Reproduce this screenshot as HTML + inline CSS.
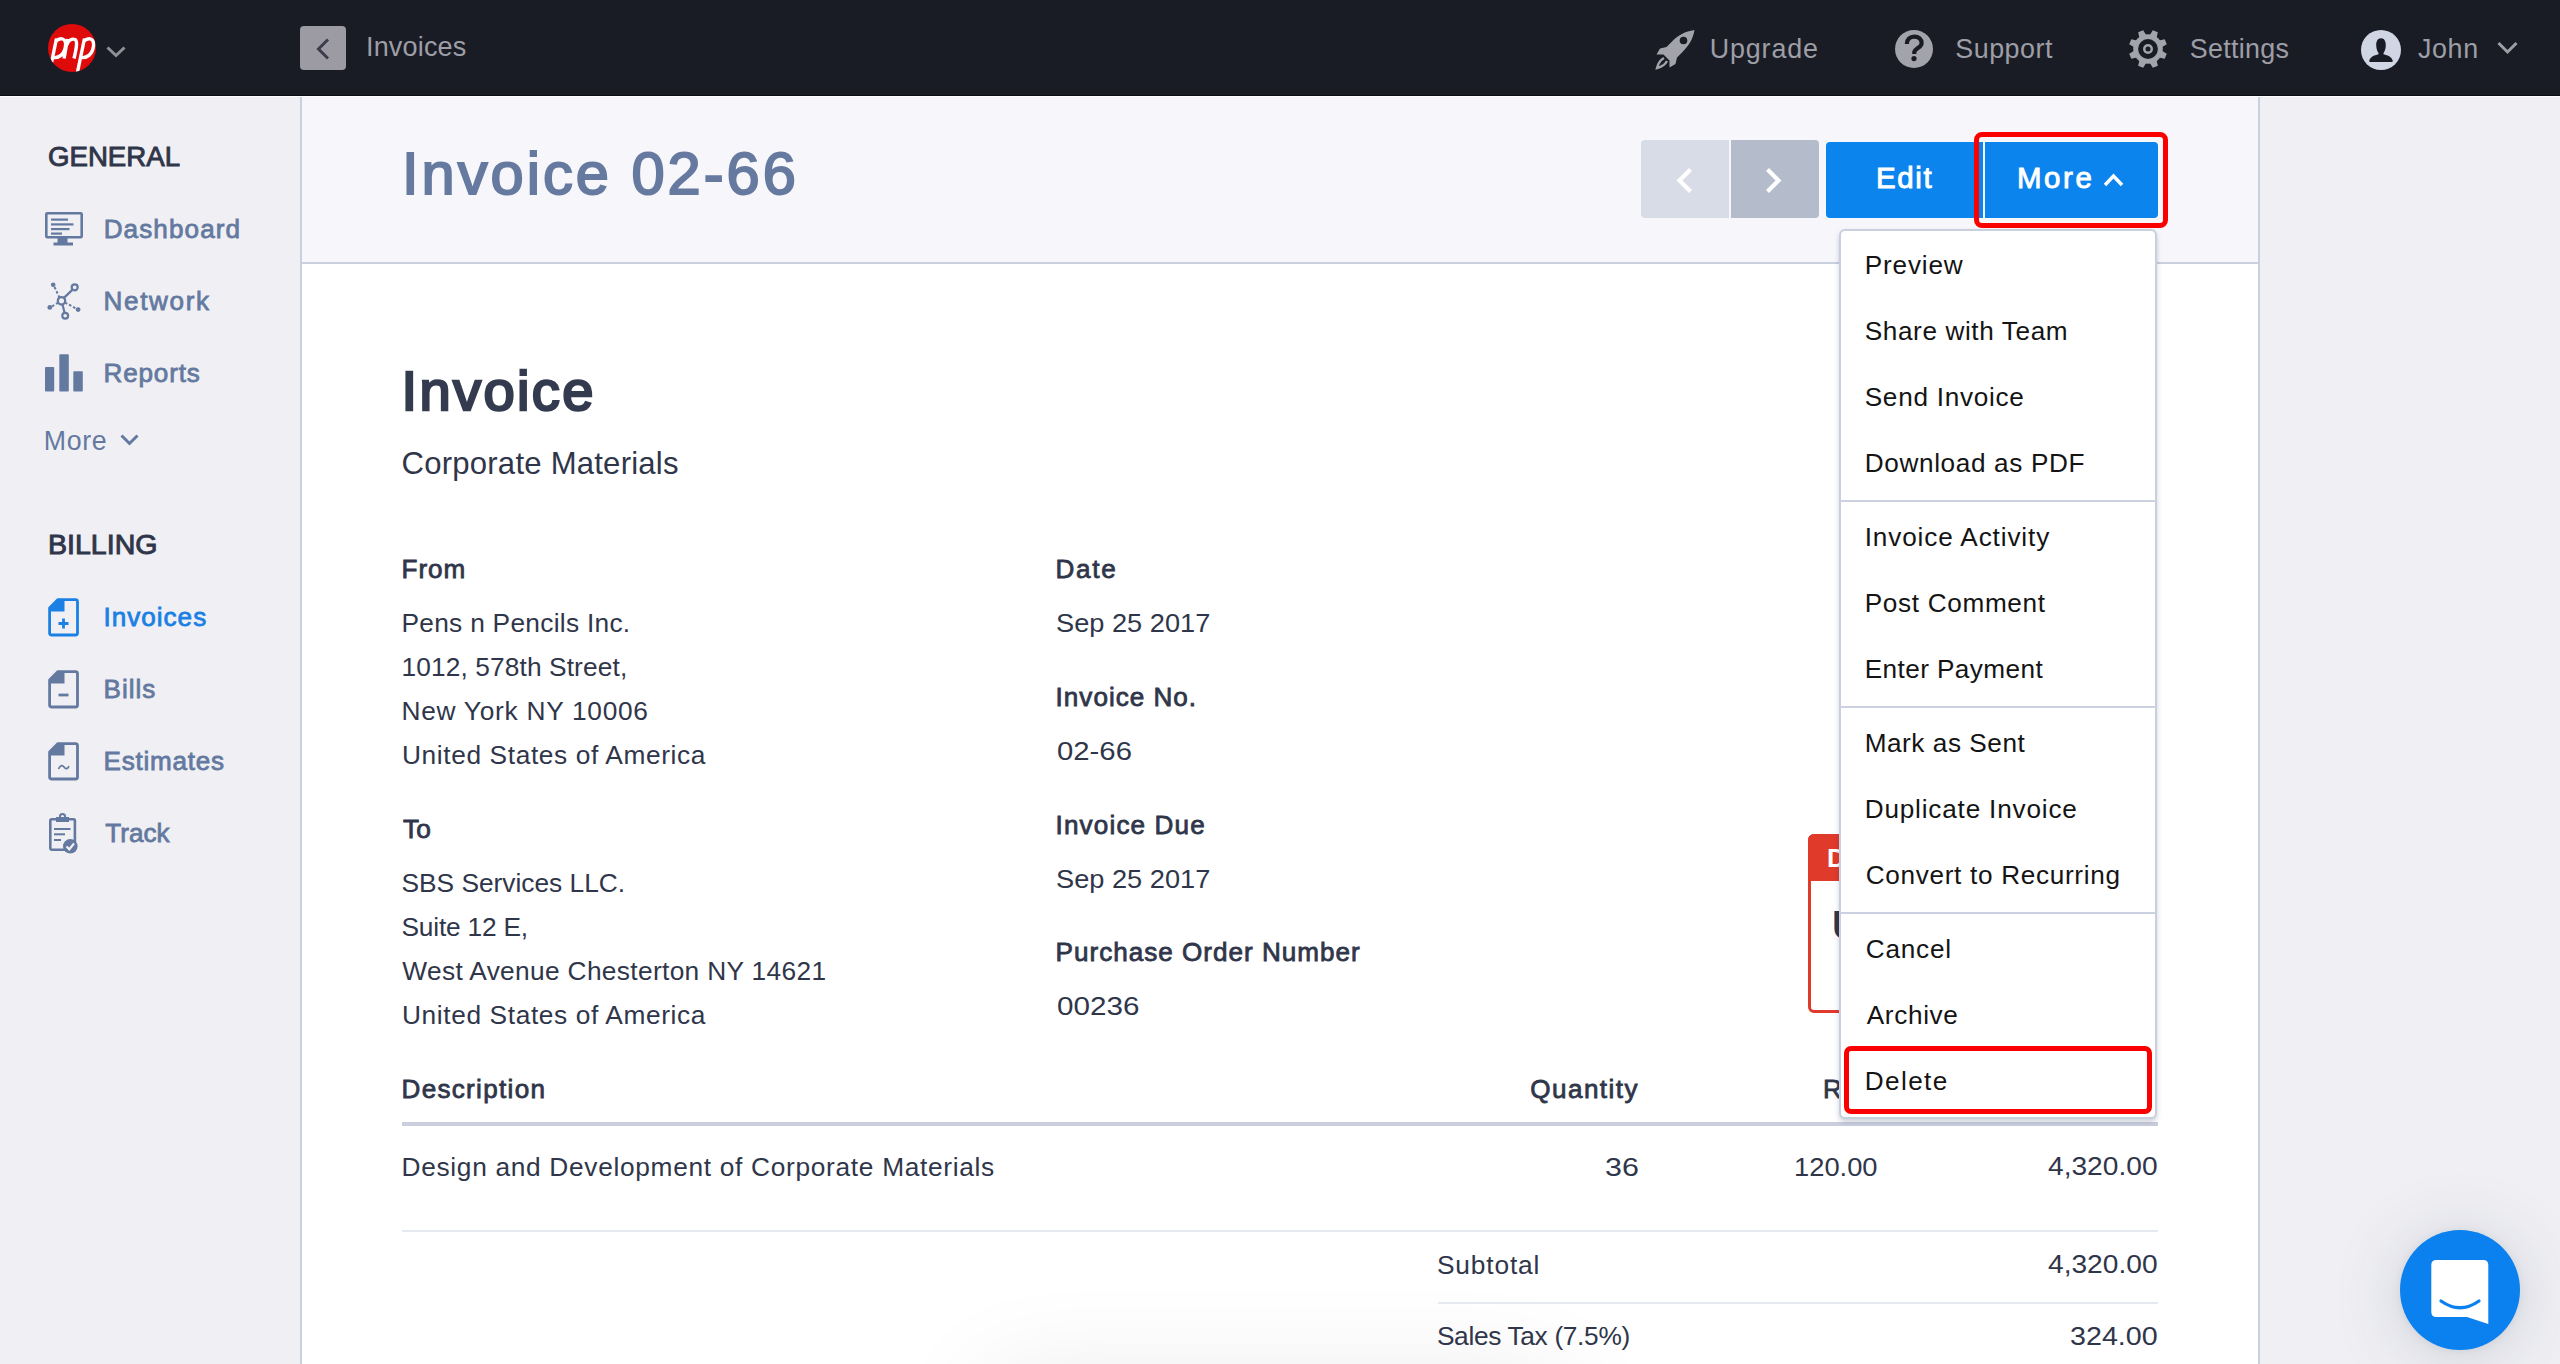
<!DOCTYPE html><html><head><meta charset="utf-8"><style>
*{box-sizing:border-box}
html,body{margin:0;padding:0}
body{width:2560px;height:1364px;overflow:hidden;position:relative;background:#f0f0f4;font-family:"Liberation Sans",sans-serif}
.a{position:absolute}
.t{position:absolute;white-space:nowrap;line-height:1}
svg{position:absolute;overflow:visible}
</style></head><body><div class="a" style="left:0;top:0;width:2560px;height:96px;background:#1a1c25"></div>
<div class="a" style="left:0;top:95px;width:2560px;height:1px;background:#0a0c12"></div>
<div class="a" style="left:0;top:96px;width:2560px;height:1px;background:#ffffff"></div>
<div class="a" style="left:302px;top:97px;width:1956px;height:1267px;background:#ffffff"></div>
<div class="a" style="left:302px;top:97px;width:1956px;height:165px;background:#f7f7fb"></div>
<div class="a" style="left:302px;top:262px;width:1956px;height:2px;background:#cbd0e0"></div>
<div class="a" style="left:300px;top:97px;width:2px;height:1267px;background:#cbd0e0"></div>
<div class="a" style="left:2258px;top:97px;width:2px;height:1267px;background:#cbd0e0"></div>
<div class="a" style="left:990px;top:1385px;width:570px;height:80px;border-radius:8px;background:#fff;box-shadow:0 0 110px rgba(20,30,60,0.105)"></div>
<svg style="left:0;top:0" width="200" height="96" viewBox="0 0 200 96">
<defs><clipPath id="lc"><circle cx="72" cy="48" r="24"/></clipPath></defs>
<circle cx="72" cy="48" r="24" fill="#df0a0a"/>
<g clip-path="url(#lc)" fill="none" stroke="#fff" stroke-width="3.4" stroke-linecap="butt">
<path d="M56.5,38.5 L50,70"/><path d="M56,41 C60,37.5 66.5,37.5 65.5,46 C64.5,54 59.5,58.5 52.5,57.5"/>
<path d="M64,58.5 L67.6,39"/><path d="M66.8,45 C68.5,40 72,38.3 75,39.5 C77.8,41 76.5,48 74,58.5"/>
<path d="M84.5,38.5 L77.5,72"/><path d="M84,41 C88,37.5 94.5,37.5 93.5,46 C92.5,54 87.5,58.5 80.5,57.5"/>
</g>
<polyline points="107.5,47.5 116,55.5 124.5,47.5" fill="none" stroke="#8f9098" stroke-width="3"/>
</svg>
<div class="a" style="left:300px;top:26px;width:46px;height:44px;border-radius:4px;background:#9c9ba3"></div>
<svg style="left:0;top:0" width="400" height="96"><polyline points="328,39.5 318.5,49 328,58.5" fill="none" stroke="#3b3d4c" stroke-width="3"/></svg>
<div class="t" style="left:366.00px;top:34.10px;font-size:27.03px;font-weight:400;letter-spacing:0.171px;color:#9d9ea6;">Invoices</div>
<div class="t" style="left:1709.80px;top:35.80px;font-size:26.89px;font-weight:400;letter-spacing:0.833px;color:#9d9ea6;">Upgrade</div>
<div class="t" style="left:1955.30px;top:35.80px;font-size:26.89px;font-weight:400;letter-spacing:0.500px;color:#9d9ea6;">Support</div>
<div class="t" style="left:2189.80px;top:35.80px;font-size:26.89px;font-weight:400;letter-spacing:0.286px;color:#9d9ea6;">Settings</div>
<div class="t" style="left:2417.90px;top:35.80px;font-size:26.89px;font-weight:400;letter-spacing:0.667px;color:#9d9ea6;">John</div>
<svg style="left:1655px;top:29px" width="42" height="40" viewBox="0 0 42 40">
<path d="M39.5,1 C30,2.5 23,6 17,12.5 L11.5,18 L5,19.5 L1.5,25.5 L8.5,25.5 L14.5,31.5 L14.5,38.5 L20.5,35 L22,28.5 L27.5,23 C34,16.5 38,10 39.5,1 Z" fill="#a2a3ab"/>
<circle cx="28.5" cy="11.5" r="3.8" fill="#1a1c25"/>
<path d="M9,29 C5,31 3,35 2,39 C6,38 10,36 12,32" fill="none" stroke="#a2a3ab" stroke-width="2.4"/>
</svg>
<svg style="left:1894px;top:29px" width="40" height="40" viewBox="0 0 40 40">
<circle cx="20" cy="20" r="19" fill="#a2a3ab"/>
<path d="M12.8,15 C12.8,10.5 16,7.6 20.2,7.6 C24.6,7.6 27.6,10.3 27.6,14.2 C27.6,18.5 21.2,19.2 20.3,23 L20.3,25" fill="none" stroke="#1a1c25" stroke-width="4.2"/>
<circle cx="20" cy="29.6" r="2.6" fill="#1a1c25"/>
</svg>
<svg style="left:2128px;top:29px" width="40" height="40" viewBox="0 0 40 40">
<polygon points="32.94,21.20 38.78,24.85 36.71,29.85 30.00,28.30 28.30,30.00 29.85,36.71 24.85,38.78 21.20,32.94 18.80,32.94 15.15,38.78 10.15,36.71 11.70,30.00 10.00,28.30 3.29,29.85 1.22,24.85 7.06,21.20 7.06,18.80 1.22,15.15 3.29,10.15 10.00,11.70 11.70,10.00 10.15,3.29 15.15,1.22 18.80,7.06 21.20,7.06 24.85,1.22 29.85,3.29 28.30,10.00 30.00,11.70 36.71,10.15 38.78,15.15 32.94,18.80" fill="#a2a3ab"/>
<circle cx="20" cy="20" r="14.8" fill="#a2a3ab"/><circle cx="20" cy="20" r="9.9" fill="#1a1c25"/>
<circle cx="20" cy="20" r="5" fill="#a2a3ab"/><circle cx="20" cy="20" r="2.5" fill="#1a1c25"/>
</svg>
<svg style="left:2361px;top:30px" width="40" height="40" viewBox="0 0 40 40">
<circle cx="20" cy="20" r="20" fill="#d0d6e4"/>
<path d="M20,8.2 C23.3,8.2 24.8,11 24.8,15 C24.8,19 23.5,21.8 22.5,23 L22.5,24.3 C27,25.3 31.2,27.3 31.8,31 Q31.8,32 30.8,32 L9.2,32 Q8.2,32 8.2,31 C8.8,27.3 13,25.3 17.5,24.3 L17.5,23 C16.5,21.8 15.2,19 15.2,15 C15.2,11 16.7,8.2 20,8.2 Z" fill="#1a1c25"/>
</svg>
<svg style="left:0;top:0" width="2560" height="96"><polyline points="2498.5,43 2507.5,52 2516.5,43" fill="none" stroke="#9d9ea6" stroke-width="3"/></svg>
<div class="t" style="left:47.80px;top:143.00px;font-size:28.05px;font-weight:400;-webkit-text-stroke:0.95px #30364a;letter-spacing:0.000px;color:#30364a;transform:scaleX(0.9850);transform-origin:0 0;">GENERAL</div>
<div class="t" style="left:103.70px;top:216.20px;font-size:26.09px;font-weight:400;-webkit-text-stroke:0.81px #6479a0;letter-spacing:1.100px;color:#6479a0;">Dashboard</div>
<div class="t" style="left:103.50px;top:287.90px;font-size:26.09px;font-weight:400;-webkit-text-stroke:0.81px #6479a0;letter-spacing:1.667px;color:#6479a0;">Network</div>
<div class="t" style="left:103.50px;top:360.20px;font-size:26.09px;font-weight:400;-webkit-text-stroke:0.81px #6479a0;letter-spacing:0.833px;color:#6479a0;">Reports</div>
<div class="t" style="left:43.80px;top:427.70px;font-size:26.74px;font-weight:400;letter-spacing:0.667px;color:#6479a0;">More</div>
<div class="t" style="left:47.50px;top:531.00px;font-size:27.49px;font-weight:400;-webkit-text-stroke:0.95px #30364a;letter-spacing:0.000px;color:#30364a;transform:scaleX(1.0392);transform-origin:0 0;">BILLING</div>
<div class="t" style="left:103.50px;top:603.60px;font-size:26.09px;font-weight:400;-webkit-text-stroke:0.81px #1b80e4;letter-spacing:1.000px;color:#1b80e4;">Invoices</div>
<div class="t" style="left:103.50px;top:675.80px;font-size:26.09px;font-weight:400;-webkit-text-stroke:0.81px #6479a0;letter-spacing:1.000px;color:#6479a0;">Bills</div>
<div class="t" style="left:103.60px;top:748.00px;font-size:26.09px;font-weight:400;-webkit-text-stroke:0.81px #6479a0;letter-spacing:0.750px;color:#6479a0;">Estimates</div>
<div class="t" style="left:105.30px;top:820.00px;font-size:26.09px;font-weight:400;-webkit-text-stroke:0.81px #6479a0;letter-spacing:0.000px;color:#6479a0;">Track</div>
<svg style="left:44px;top:211px" width="40" height="36" viewBox="0 0 40 36">
<rect x="2.3" y="2.3" width="35.4" height="24" rx="1" fill="none" stroke="#6479a0" stroke-width="2.6"/>
<rect x="7" y="7.5" width="17" height="2.2" fill="#6479a0"/><rect x="7" y="12.3" width="22.5" height="2.2" fill="#6479a0"/>
<rect x="7" y="17" width="18.5" height="2.2" fill="#6479a0"/><rect x="7" y="21.5" width="11" height="2.2" fill="#6479a0"/>
<rect x="13.5" y="26" width="10" height="6" fill="#6479a0"/><rect x="9.5" y="31.5" width="19.5" height="3" fill="#6479a0"/>
</svg>
<svg style="left:46px;top:281px" width="36" height="40" viewBox="0 0 36 40">
<circle cx="15.5" cy="19.8" r="3.7" fill="none" stroke="#6479a0" stroke-width="2.3"/>
<circle cx="28.7" cy="6.3" r="3" fill="none" stroke="#6479a0" stroke-width="2.2"/>
<circle cx="19.2" cy="34.8" r="2.9" fill="none" stroke="#6479a0" stroke-width="2.2"/>
<circle cx="7.2" cy="3.7" r="2.3" fill="#6479a0"/><circle cx="3.8" cy="26.4" r="2.4" fill="#6479a0"/><circle cx="32.1" cy="28.6" r="2.4" fill="#6479a0"/>
<line x1="17.9" y1="16.9" x2="26.6" y2="8.6" stroke="#6479a0" stroke-width="2.2"/>
<line x1="16.5" y1="23.4" x2="18.6" y2="31.9" stroke="#6479a0" stroke-width="2.2"/>
<line x1="8.5" y1="6" x2="13.5" y2="16.5" stroke="#6479a0" stroke-width="2" stroke-dasharray="2.6,2"/>
<line x1="6" y1="25.3" x2="12" y2="21.8" stroke="#6479a0" stroke-width="2" stroke-dasharray="2.6,2"/>
<line x1="19" y1="21.5" x2="30" y2="27.6" stroke="#6479a0" stroke-width="2" stroke-dasharray="2.6,2"/>
</svg>
<svg style="left:45px;top:354px" width="40" height="40" viewBox="0 0 40 40">
<rect x="0" y="13" width="9.2" height="24.6" rx="0.8" fill="#6479a0"/>
<rect x="14.3" y="0.3" width="9.5" height="37.3" rx="0.8" fill="#6479a0"/>
<rect x="28.3" y="17.2" width="9.5" height="20.4" rx="0.8" fill="#6479a0"/>
</svg>
<svg style="left:0;top:0" width="300" height="500"><polyline points="121.5,435.5 129.5,443.5 137.5,435.5" fill="none" stroke="#6479a0" stroke-width="3"/></svg>
<svg style="left:48px;top:598px" width="32" height="40" viewBox="0 0 32 40">
<path d="M10,1.6 L27.5,1.6 Q29.5,1.6 29.5,3.6 L29.5,35 Q29.5,37 27.5,37 L3.6,37 Q1.6,37 1.6,35 L1.6,10 Z" fill="none" stroke="#1b80e4" stroke-width="2.8" stroke-linejoin="round"/>
<path d="M10.5,1 L16.5,1 L16.5,13.5 L1,13.5 L1,10.5 Z" fill="#1b80e4"/>
<path d="M15.5,20.5 V30.5 M10.5,25.5 H20.5" stroke="#1b80e4" stroke-width="2.8"/></svg>
<svg style="left:48px;top:670px" width="32" height="40" viewBox="0 0 32 40">
<path d="M10,1.6 L27.5,1.6 Q29.5,1.6 29.5,3.6 L29.5,35 Q29.5,37 27.5,37 L3.6,37 Q1.6,37 1.6,35 L1.6,10 Z" fill="none" stroke="#6479a0" stroke-width="2.8" stroke-linejoin="round"/>
<path d="M10.5,1 L16.5,1 L16.5,13.5 L1,13.5 L1,10.5 Z" fill="#6479a0"/>
<path d="M10.5,25 H20.5" stroke="#6479a0" stroke-width="2.8"/></svg>
<svg style="left:48px;top:742px" width="32" height="40" viewBox="0 0 32 40">
<path d="M10,1.6 L27.5,1.6 Q29.5,1.6 29.5,3.6 L29.5,35 Q29.5,37 27.5,37 L3.6,37 Q1.6,37 1.6,35 L1.6,10 Z" fill="none" stroke="#6479a0" stroke-width="2.8" stroke-linejoin="round"/>
<path d="M10.5,1 L16.5,1 L16.5,13.5 L1,13.5 L1,10.5 Z" fill="#6479a0"/>
<path d="M10.5,27 C12.5,22.5 14.5,23 16,25 C17.5,27 19.5,27.5 21,24" fill="none" stroke="#6479a0" stroke-width="1.8"/></svg>
<svg style="left:48px;top:813px" width="34" height="40" viewBox="0 0 34 40">
<rect x="2.3" y="6.3" width="24.6" height="30.5" rx="1.5" fill="none" stroke="#6479a0" stroke-width="2.6"/>
<rect x="8" y="4" width="13" height="5" fill="#6479a0"/><circle cx="14.5" cy="3.6" r="2.6" fill="none" stroke="#6479a0" stroke-width="2"/>
<rect x="6" y="15" width="16.5" height="2" fill="#6479a0"/><rect x="6" y="20.3" width="11" height="2" fill="#6479a0"/><rect x="6" y="26" width="7" height="2" fill="#6479a0"/>
<circle cx="22.3" cy="33.3" r="7.3" fill="#6479a0" stroke="#f0f0f4" stroke-width="0"/>
<polyline points="18.5,33.5 21.3,36.3 26,30.5" fill="none" stroke="#f0f0f4" stroke-width="2.2"/>
</svg>
<div class="t" style="left:402.00px;top:144.00px;font-size:59.61px;font-weight:400;-webkit-text-stroke:1.97px #667aa0;letter-spacing:3.000px;color:#667aa0;">Invoice 02-66</div>
<div class="a" style="left:1641px;top:140px;width:88px;height:78px;background:#d8dce6;border-radius:4px 0 0 4px"></div>
<div class="a" style="left:1731px;top:140px;width:88px;height:78px;background:#b4bccc;border-radius:0 4px 4px 0"></div>
<svg style="left:0;top:0" width="2560" height="300"><polyline points="1690.5,169.5 1679.5,180.5 1690.5,191.5" fill="none" stroke="#fff" stroke-width="4.2"/><polyline points="1767.5,169.5 1778.5,180.5 1767.5,191.5" fill="none" stroke="#fff" stroke-width="4.2"/></svg>
<div class="a" style="left:1826px;top:142px;width:157px;height:76px;background:#0b84ee;border-radius:4px 0 0 4px"></div>
<div class="a" style="left:1985px;top:142px;width:173px;height:76px;background:#0b84ee;border-radius:0 4px 4px 0"></div>
<div class="t" style="left:1876.00px;top:163.40px;font-size:29.45px;font-weight:400;-webkit-text-stroke:0.91px #ffffff;letter-spacing:1.667px;color:#ffffff;">Edit</div>
<div class="t" style="left:2016.90px;top:163.40px;font-size:29.45px;font-weight:400;-webkit-text-stroke:0.91px #ffffff;letter-spacing:2.667px;color:#ffffff;">More</div>
<svg style="left:0;top:0" width="2560" height="300"><polyline points="2105,185 2113.5,176 2122,185" fill="none" stroke="#fff" stroke-width="3.4"/></svg>
<div class="a" style="left:1974px;top:132px;width:194px;height:96px;border:5.5px solid #fb0000;border-radius:8px"></div>
<div class="t" style="left:401.60px;top:362.75px;font-size:56.10px;font-weight:400;-webkit-text-stroke:2.47px #343b4f;letter-spacing:2.333px;color:#343b4f;">Invoice</div>
<div class="t" style="left:401.50px;top:447.75px;font-size:31.10px;font-weight:400;letter-spacing:0.222px;color:#30364a;">Corporate Materials</div>
<div class="t" style="left:401.50px;top:556.10px;font-size:26.09px;font-weight:400;-webkit-text-stroke:0.81px #30364a;letter-spacing:1.000px;color:#30364a;">From</div>
<div class="t" style="left:401.50px;top:610.00px;font-size:26.31px;font-weight:400;letter-spacing:0.278px;color:#30364a;">Pens n Pencils Inc.</div>
<div class="t" style="left:401.50px;top:654.00px;font-size:26.31px;font-weight:400;letter-spacing:0.111px;color:#30364a;">1012, 578th Street,</div>
<div class="t" style="left:401.50px;top:698.00px;font-size:26.31px;font-weight:400;letter-spacing:0.725px;color:#30364a;">New York NY 10006</div>
<div class="t" style="left:402.00px;top:741.90px;font-size:26.31px;font-weight:400;letter-spacing:0.609px;color:#30364a;">United States of America</div>
<div class="t" style="left:402.90px;top:815.80px;font-size:26.09px;font-weight:400;-webkit-text-stroke:0.81px #30364a;letter-spacing:0.000px;color:#30364a;transform:scaleX(1.0079);transform-origin:0 0;">To</div>
<div class="t" style="left:401.50px;top:869.50px;font-size:26.31px;font-weight:400;letter-spacing:0.000px;color:#30364a;">SBS Services LLC.</div>
<div class="t" style="left:401.50px;top:913.80px;font-size:26.31px;font-weight:400;letter-spacing:-0.200px;color:#30364a;">Suite 12 E,</div>
<div class="t" style="left:402.30px;top:957.80px;font-size:26.31px;font-weight:400;letter-spacing:0.333px;color:#30364a;">West Avenue Chesterton NY 14621</div>
<div class="t" style="left:402.00px;top:1002.30px;font-size:26.31px;font-weight:400;letter-spacing:0.609px;color:#30364a;">United States of America</div>
<div class="t" style="left:1055.60px;top:555.90px;font-size:26.09px;font-weight:400;-webkit-text-stroke:0.81px #30364a;letter-spacing:1.667px;color:#30364a;">Date</div>
<div class="t" style="left:1055.60px;top:610.00px;font-size:26.31px;font-weight:400;letter-spacing:0.000px;color:#30364a;transform:scaleX(1.0342);transform-origin:0 0;">Sep 25 2017</div>
<div class="t" style="left:1055.60px;top:684.00px;font-size:26.09px;font-weight:400;-webkit-text-stroke:0.81px #30364a;letter-spacing:1.000px;color:#30364a;">Invoice No.</div>
<div class="t" style="left:1056.60px;top:737.50px;font-size:26.31px;font-weight:400;letter-spacing:0.000px;color:#30364a;transform:scaleX(1.1139);transform-origin:0 0;">02-66</div>
<div class="t" style="left:1055.60px;top:811.80px;font-size:26.09px;font-weight:400;-webkit-text-stroke:0.81px #30364a;letter-spacing:1.140px;color:#30364a;">Invoice Due</div>
<div class="t" style="left:1055.60px;top:866.00px;font-size:26.31px;font-weight:400;letter-spacing:0.000px;color:#30364a;transform:scaleX(1.0342);transform-origin:0 0;">Sep 25 2017</div>
<div class="t" style="left:1055.60px;top:939.00px;font-size:26.09px;font-weight:400;-webkit-text-stroke:0.81px #30364a;letter-spacing:1.000px;color:#30364a;">Purchase Order Number</div>
<div class="t" style="left:1056.60px;top:993.00px;font-size:26.31px;font-weight:400;letter-spacing:0.000px;color:#30364a;transform:scaleX(1.1268);transform-origin:0 0;">00236</div>
<div class="t" style="left:401.50px;top:1076.30px;font-size:26.09px;font-weight:400;-webkit-text-stroke:0.81px #30364a;letter-spacing:1.300px;color:#30364a;">Description</div>
<div class="t" style="left:1530.30px;top:1076.30px;font-size:26.09px;font-weight:400;-webkit-text-stroke:0.81px #30364a;letter-spacing:1.429px;color:#30364a;">Quantity</div>
<div class="t" style="left:1823.00px;top:1076.30px;font-size:26.09px;font-weight:400;-webkit-text-stroke:0.81px #30364a;letter-spacing:0.000px;color:#30364a;">Rate</div>
<div class="t" style="left:401.50px;top:1153.80px;font-size:26.31px;font-weight:400;letter-spacing:0.682px;color:#30364a;">Design and Development of Corporate Materials</div>
<div class="t" style="left:1605.30px;top:1153.90px;font-size:26.31px;font-weight:400;letter-spacing:0.000px;color:#30364a;transform:scaleX(1.1560);transform-origin:0 0;">36</div>
<div class="t" style="left:1793.70px;top:1153.90px;font-size:26.31px;font-weight:400;letter-spacing:0.000px;color:#30364a;transform:scaleX(1.0390);transform-origin:0 0;">120.00</div>
<div class="t" style="left:2047.70px;top:1153.30px;font-size:26.31px;font-weight:400;letter-spacing:0.000px;color:#30364a;transform:scaleX(1.0701);transform-origin:0 0;">4,320.00</div>
<div class="t" style="left:1436.90px;top:1252.00px;font-size:26.31px;font-weight:400;letter-spacing:0.857px;color:#30364a;">Subtotal</div>
<div class="t" style="left:2047.70px;top:1251.40px;font-size:26.31px;font-weight:400;letter-spacing:0.000px;color:#30364a;transform:scaleX(1.0701);transform-origin:0 0;">4,320.00</div>
<div class="t" style="left:1436.90px;top:1323.20px;font-size:26.31px;font-weight:400;letter-spacing:-0.333px;color:#30364a;">Sales Tax (7.5%)</div>
<div class="t" style="left:2069.70px;top:1323.10px;font-size:26.31px;font-weight:400;letter-spacing:0.000px;color:#30364a;transform:scaleX(1.0899);transform-origin:0 0;">324.00</div>
<div class="a" style="left:402px;top:1122px;width:1756px;height:4px;background:#c9cfdd"></div>
<div class="a" style="left:402px;top:1230px;width:1756px;height:2px;background:#e6e9f0"></div>
<div class="a" style="left:1438px;top:1302px;width:720px;height:2px;background:#e6e9f0"></div>
<div class="a" style="left:1808px;top:834px;width:300px;height:179px;border:3.5px solid #e03a2a;border-radius:6px;background:#fff"></div>
<div class="a" style="left:1808px;top:834px;width:300px;height:47px;background:#e03a2a;border-radius:6px 6px 0 0"></div>
<div class="t" style="left:1827px;top:845px;font-size:26px;font-weight:700;color:#fff">DUE</div>
<div class="t" style="left:1832px;top:905px;font-size:40px;font-weight:700;color:#30364a">U</div>
<div class="a" style="left:1839px;top:229px;width:318px;height:890px;background:#fff;border:2px solid #c8cfdf;border-radius:6px;box-shadow:0 3px 5px rgba(60,70,100,0.25)"></div>
<div class="a" style="left:1840px;top:500px;width:316px;height:2px;background:#cbd1e0"></div>
<div class="a" style="left:1840px;top:706px;width:316px;height:2px;background:#cbd1e0"></div>
<div class="a" style="left:1840px;top:912px;width:316px;height:2px;background:#cbd1e0"></div>
<div class="t" style="left:1864.70px;top:252.20px;font-size:26.16px;font-weight:400;letter-spacing:0.833px;color:#141414;">Preview</div>
<div class="t" style="left:1864.70px;top:318.00px;font-size:26.16px;font-weight:400;letter-spacing:0.614px;color:#141414;">Share with Team</div>
<div class="t" style="left:1864.70px;top:384.00px;font-size:26.16px;font-weight:400;letter-spacing:0.727px;color:#141414;">Send Invoice</div>
<div class="t" style="left:1864.70px;top:450.00px;font-size:26.16px;font-weight:400;letter-spacing:0.643px;color:#141414;">Download as PDF</div>
<div class="t" style="left:1864.70px;top:524.00px;font-size:26.16px;font-weight:400;letter-spacing:0.867px;color:#141414;">Invoice Activity</div>
<div class="t" style="left:1864.70px;top:590.00px;font-size:26.16px;font-weight:400;letter-spacing:0.673px;color:#141414;">Post Comment</div>
<div class="t" style="left:1864.70px;top:656.00px;font-size:26.16px;font-weight:400;letter-spacing:0.417px;color:#141414;">Enter Payment</div>
<div class="t" style="left:1864.70px;top:730.00px;font-size:26.16px;font-weight:400;letter-spacing:0.545px;color:#141414;">Mark as Sent</div>
<div class="t" style="left:1864.70px;top:796.00px;font-size:26.16px;font-weight:400;letter-spacing:0.812px;color:#141414;">Duplicate Invoice</div>
<div class="t" style="left:1865.70px;top:862.00px;font-size:26.16px;font-weight:400;letter-spacing:0.684px;color:#141414;">Convert to Recurring</div>
<div class="t" style="left:1865.70px;top:936.00px;font-size:26.16px;font-weight:400;letter-spacing:0.800px;color:#141414;">Cancel</div>
<div class="t" style="left:1866.70px;top:1002.00px;font-size:26.16px;font-weight:400;letter-spacing:0.667px;color:#141414;">Archive</div>
<div class="t" style="left:1864.70px;top:1068.00px;font-size:26.16px;font-weight:400;letter-spacing:1.400px;color:#141414;">Delete</div>
<div class="a" style="left:1844px;top:1046px;width:308px;height:68px;border:5.5px solid #fb0000;border-radius:7px"></div>
<div class="a" style="left:2400px;top:1230px;width:120px;height:120px;border-radius:50%;background:#0b80ef;box-shadow:0 6px 70px rgba(30,40,70,0.17), 0 1px 8px rgba(30,40,70,0.08)"></div>
<svg style="left:2380px;top:1210px" width="160" height="160" viewBox="0 0 160 160">
<path d="M56.3,50 Q51.3,50 51.3,55 L51.3,102 Q51.3,107 56.3,107 L87,107 L108.3,114 L108.3,55 Q108.3,50 103.3,50 Z" fill="#fff"/>
<path d="M61,91 Q80,104.5 99,91" fill="none" stroke="#0b80ef" stroke-width="3.2" stroke-linecap="round"/>
</svg></body></html>
